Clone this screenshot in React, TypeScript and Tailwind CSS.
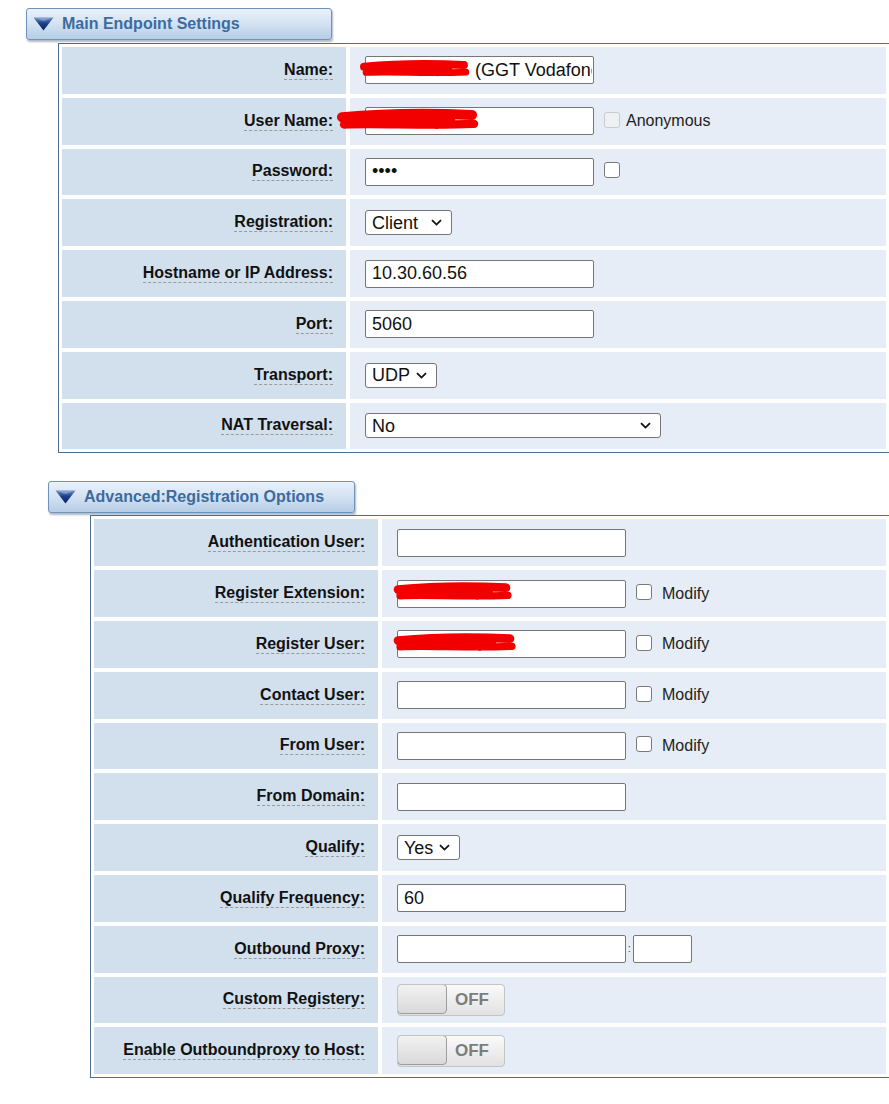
import React from "react";

const FONT = "font-['Liberation_Sans',Arial,Helvetica,sans-serif]";

const Triangle = () => (
  <svg width="21" height="14" viewBox="0 0 21 14" className="shrink-0">
    <defs>
      <linearGradient id="tri" x1="0" y1="0" x2="0" y2="1">
        <stop offset="0" stopColor="#6d8fc4" />
        <stop offset="0.45" stopColor="#1d3f8c" />
        <stop offset="1" stopColor="#0b1f5c" />
      </linearGradient>
    </defs>
    <polygon points="0.5,0.5 20.5,0.5 10.5,13.5" fill="url(#tri)" />
    <polygon points="2,1 19,1 10.5,4" fill="#9db6de" opacity="0.6" />
  </svg>
);

const SectionHeader = ({ title, className }: { title: string; className: string }) => (
  <div
    className={`flex items-center gap-[8px] h-[32px] pl-[6px] rounded-[3px] border border-[#6f92b8] bg-gradient-to-b from-[#eaf1f9] via-[#d3e2f2] to-[#b5cde6] shadow-[1px_2px_2px_rgba(80,100,130,0.45)] ${className}`}
  >
    <Triangle />
    <span className="text-[16px] font-bold text-[#3c6b9e] leading-none">{title}</span>
  </div>
);

// red marker strokes covering private values
const Scribble = ({ className, w, h }: { className: string; w: number; h: number }) => (
  <svg width={w} height={h} viewBox={`0 0 ${w} ${h}`} className={`absolute pointer-events-none ${className}`}>
    <g stroke="#f20000" strokeLinecap="round" fill="none">
      <path d={`M5 ${h * 0.4} C ${w * 0.25} ${h * 0.3}, ${w * 0.55} ${h * 0.22}, ${w - 7} ${h * 0.32}`} strokeWidth={h * 0.36} />
      <path d={`M7 ${h * 0.66} C ${w * 0.3} ${h * 0.6}, ${w * 0.6} ${h * 0.72}, ${w - 5} ${h * 0.64}`} strokeWidth={h * 0.3} />
      <path d={`M${w * 0.2} ${h * 0.52} L ${w * 0.8} ${h * 0.48}`} strokeWidth={h * 0.34} />
      <path d={`M${w * 0.55} ${h * 0.3} L ${w * 0.7} ${h * 0.72}`} strokeWidth={h * 0.2} />
    </g>
  </svg>
);

const Label = ({ text }: { text: string }) => (
  <div className="flex items-center justify-end pr-[13px] bg-[#d2e0ee]">
    <span className="text-[16px] font-bold text-[#111] leading-[18px] border-b border-dashed border-[#9a9a9a]">
      {text}
    </span>
  </div>
);

const TextBox = ({ value = "", width = "w-[229px]", className = "px-[6px]", type = "text" }: { value?: string; width?: string; className?: string; type?: string }) => (
  <input
    type={type}
    readOnly
    value={value}
    className={`${width} h-[28px] bg-white border border-[#767676] rounded-[2px] text-[18px] text-[#111] outline-none ${className}`}
  />
);

const Chevron = () => (
  <svg width="11" height="7" viewBox="0 0 11 7" className="shrink-0">
    <path d="M1 1.2 L5.5 5.6 L10 1.2" stroke="#111" strokeWidth="1.8" fill="none" />
  </svg>
);

const SelectBox = ({ value, width }: { value: string; width: string }) => (
  <div className={`${width} h-[25px] flex items-center justify-between bg-white border border-[#767676] rounded-[3px] pl-[6px] pr-[9px] text-[18px] text-[#111] leading-none`}>
    <span>{value}</span>
    <Chevron />
  </div>
);

const Check = ({ disabled = false }: { disabled?: boolean }) => (
  <span
    className={`inline-block w-[16px] h-[16px] rounded-[3px] border ${disabled ? "border-[#c8ccd0] bg-[#eef1f4]" : "border-[#7a7a7a] bg-white"} -mt-[3px]`}
  />
);

const Toggle = () => (
  <div className="w-[108px] h-[32px] flex rounded-[4px] border border-[#c4c4c4] bg-gradient-to-b from-[#fafafa] to-[#e2e2e2] overflow-hidden">
    <div className="w-[50px] h-full rounded-[4px] border border-[#9c9c9c] bg-gradient-to-b from-[#f2f2f2] to-[#d9d9d9] -m-px" />
    <div className="flex-1 flex items-center pl-[9px] text-[17px] font-bold text-[#7d7d7d]">OFF</div>
  </div>
);

const Row = ({ label, children }: { label: string; children: React.ReactNode }) => (
  <div className="grid grid-cols-[284px_1fr] gap-[4px] h-[46.8px]">
    <Label text={label} />
    <div className="flex items-center gap-[10px] pl-[15px] bg-[#e6edf6] text-[16px] text-[#222]">{children}</div>
  </div>
);

const Panel = ({ children, className }: { children: React.ReactNode; className: string }) => (
  <div className={`border border-[#4f6f8c] border-r-0 p-[3px] flex flex-col gap-[4px] ${className}`}>{children}</div>
);

export default function App() {
  return (
    <div className={`${FONT} w-[889px] h-[1104px] overflow-hidden bg-white pt-[8px]`}>
      <SectionHeader title="Main Endpoint Settings" className="ml-[26px] w-[306px]" />
      <Panel className="ml-[58px] mt-[3px]">
        <Row label="Name:">
          <div className="relative">
            <TextBox value="(GGT Vodafone)" className="pl-[109px] pr-[1px]" />
            <Scribble className="-left-[6px] top-[2px]" w={112} h={22} />
          </div>
        </Row>
        <Row label="User Name:">
          <div className="relative">
            <TextBox />
            <Scribble className="-left-[28px] top-[-1px]" w={142} h={28} />
          </div>
          <Check disabled />
          <span className="-ml-[4px]">Anonymous</span>
        </Row>
        <Row label="Password:">
          <TextBox type="password" value="1234" />
          <Check />
        </Row>
        <Row label="Registration:">
          <SelectBox value="Client" width="w-[87px]" />
        </Row>
        <Row label="Hostname or IP Address:">
          <TextBox value="10.30.60.56" />
        </Row>
        <Row label="Port:">
          <TextBox value="5060" />
        </Row>
        <Row label="Transport:">
          <SelectBox value="UDP" width="w-[72px]" />
        </Row>
        <Row label="NAT Traversal:">
          <SelectBox value="No" width="w-[296px]" />
        </Row>
      </Panel>

      <SectionHeader title="Advanced:Registration Options" className="ml-[48px] w-[307px] mt-[28px]" />
      <Panel className="ml-[90px] mt-[2px]">
        <Row label="Authentication User:">
          <TextBox />
        </Row>
        <Row label="Register Extension:">
          <div className="relative">
            <TextBox />
            <Scribble className="-left-[4px] top-[0px]" w={120} h={24} />
          </div>
          <Check />
          <span>Modify</span>
        </Row>
        <Row label="Register User:">
          <div className="relative">
            <TextBox />
            <Scribble className="-left-[4px] top-[1px]" w={124} h={24} />
          </div>
          <Check />
          <span>Modify</span>
        </Row>
        <Row label="Contact User:">
          <TextBox />
          <Check />
          <span>Modify</span>
        </Row>
        <Row label="From User:">
          <TextBox />
          <Check />
          <span>Modify</span>
        </Row>
        <Row label="From Domain:">
          <TextBox />
        </Row>
        <Row label="Qualify:">
          <SelectBox value="Yes" width="w-[63px]" />
        </Row>
        <Row label="Qualify Frequency:">
          <TextBox value="60" />
        </Row>
        <Row label="Outbound Proxy:">
          <div className="flex items-center gap-[2px]">
            <TextBox />
            <span className="text-[10px] leading-none text-[#333]">:</span>
            <TextBox width="w-[59px]" />
          </div>
        </Row>
        <Row label="Custom Registery:">
          <Toggle />
        </Row>
        <Row label="Enable Outboundproxy to Host:">
          <Toggle />
        </Row>
      </Panel>
    </div>
  );
}
